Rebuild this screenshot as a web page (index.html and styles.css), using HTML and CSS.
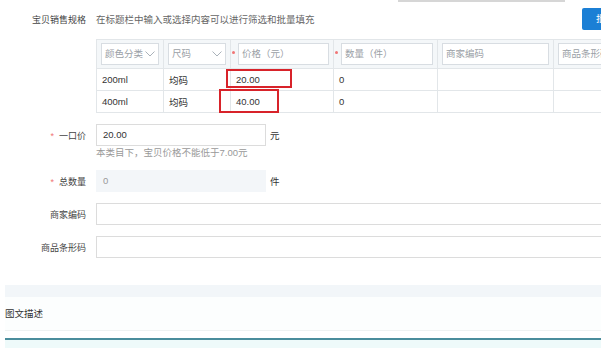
FILE: index.html
```html
<!DOCTYPE html>
<html lang="zh-CN">
<head>
<meta charset="UTF-8">
<title>宝贝销售规格</title>
<link rel="stylesheet" href="styles.css">
</head>
<body>
<div class="page">
  <div class="topline"></div>

  <div class="spec-row">
    <div class="label">宝贝销售规格</div>
    <div class="spec-hint">在标题栏中输入或选择内容可以进行筛选和批量填充</div>
    <div class="btn-batch">批量填充</div>
  </div>

  <table class="sku">
    <colgroup>
      <col style="width:67px"><col style="width:67px"><col style="width:103px">
      <col style="width:104px"><col style="width:116px"><col style="width:130px">
    </colgroup>
    <thead>
      <tr>
        <td><div class="hbox select">颜色分类<svg class="chev" width="10" height="6" viewBox="0 0 10 6"><polyline points="0.5,0.5 5,5 9.5,0.5" fill="none" stroke="#aab2ba" stroke-width="1"/></svg></div></td>
        <td><div class="hbox select">尺码<svg class="chev" width="10" height="6" viewBox="0 0 10 6"><polyline points="0.5,0.5 5,5 9.5,0.5" fill="none" stroke="#aab2ba" stroke-width="1"/></svg></div></td>
        <td class="req"><div class="hcell"><span class="hstar"></span><div class="hbox">价格（元）</div></div></td>
        <td class="req"><div class="hcell"><span class="hstar"></span><div class="hbox">数量（件）</div></div></td>
        <td><div class="hbox">商家编码</div></td>
        <td><div class="hbox">商品条形码</div></td>
      </tr>
    </thead>
    <tbody>
      <tr>
        <td>200ml</td><td>均码</td>
        <td class="price">20.00<span class="mark mark-1"></span></td>
        <td>0</td><td></td><td></td>
      </tr>
      <tr>
        <td>400ml</td><td>均码</td>
        <td class="price">40.00<span class="mark mark-2"></span></td>
        <td>0</td><td></td><td></td>
      </tr>
    </tbody>
  </table>

  <div class="form-row row-price">
    <div class="label"><span class="star">*</span>一口价</div>
    <div class="input">20.00</div>
    <span class="unit">元</span>
  </div>
  <div class="field-hint">本类目下，宝贝价格不能低于7.00元</div>

  <div class="form-row row-qty">
    <div class="label"><span class="star">*</span>总数量</div>
    <div class="input disabled">0</div>
    <span class="unit">件</span>
  </div>

  <div class="form-row row-code">
    <div class="label">商家编码</div>
    <div class="input wide"></div>
  </div>

  <div class="form-row row-bar">
    <div class="label">商品条形码</div>
    <div class="input wide"></div>
  </div>

  <div class="desc-band"></div>
  <div class="desc-head">图文描述</div>
  <div class="desc-line"></div>
  <div class="desc-body"></div>
</div>
</body>
</html>
```

FILE: styles.css
```css
body {
    margin: 0;
    font-family: "Liberation Sans", "Noto Sans CJK SC", sans-serif;
    font-size: 9.5px;
    color: #333;
    background: #fff;
    overflow: hidden;
}

.page {
    width: 700px;
}

.topline {
    margin-left: 398px;
    width: 167px;
    height: 2px;
    background: #d6d6d6;
}

/* 规格标题行 */
.spec-row {
    display: flex;
    align-items: center;
    height: 22px;
    margin-top: 6px;
}

.label {
    flex: none;
    width: 86px;
    text-align: right;
    font-size: 9px;
    color: #444;
}

.spec-hint {
    flex: 1;
    margin-left: 10px;
    color: #666;
}

.btn-batch {
    flex: none;
    width: 118px;
    height: 22px;
    line-height: 22px;
    padding-left: 14px;
    box-sizing: border-box;
    background: #1b7fd5;
    color: #fff;
    border-radius: 2px;
}

/* SKU 表格 */
.sku {
    margin: 9px 0 0 96px;
    border-collapse: collapse;
    table-layout: fixed;
    width: 587px;
}

.sku td {
    border: 1px solid #e2e6e9;
    height: 21px;
    padding: 0 5px;
    white-space: nowrap;
    overflow: visible;
}

.sku thead td {
    background: #f4f7f9;
    height: 28px;
    padding: 0 4px;
}

.sku thead td.req {
    padding-left: 1px;
}

.hcell {
    display: flex;
    align-items: center;
}

.hstar {
    flex: none;
    width: 3px;
    height: 3px;
    margin: 0 3px 4px 0;
    border-radius: 50%;
    background: #f07575;
}

.hbox {
    flex: 1;
    height: 22px;
    line-height: 20px;
    box-sizing: border-box;
    border: 1px solid #d8dde2;
    background: #fff;
    color: #9aa0a6;
    padding: 0 3px;
}

.select {
    display: flex;
    align-items: center;
    justify-content: space-between;
}

.chev {
    flex: none;
}

.price {
    position: relative;
}

.mark {
    position: absolute;
    border: 2px solid #d8232a;
    box-sizing: border-box;
}

.mark-1 {
    left: -5px;
    top: 0;
    width: 66px;
    height: 19px;
}

.mark-2 {
    left: -12px;
    top: -2px;
    width: 60px;
    height: 24px;
}

/* 表单 */
.form-row {
    display: flex;
    align-items: center;
    height: 22px;
}

.form-row .label {
    margin-right: 10px;
}

.star {
    color: #f07575;
    margin-right: 5px;
}

.row-price { margin-top: 11px; }
.row-qty { margin-top: 10px; }
.row-code { margin-top: 11px; }
.row-bar { margin-top: 11px; }

.input {
    width: 170px;
    height: 22px;
    line-height: 20px;
    box-sizing: border-box;
    border: 1px solid #dcdcdc;
    padding: 0 6px;
    background: #fff;
}

.input.wide {
    flex: 1;
}

.input.disabled {
    border-color: #f3f6f9;
    background: #f3f6f9;
    color: #999;
}

.unit {
    margin-left: 4px;
}

.field-hint {
    margin-left: 96px;
    height: 14px;
    line-height: 14px;
    color: #999;
}

/* 图文描述 */
.desc-band {
    margin: 27px 0 0 5px;
    height: 12px;
    background: #f2f6f9;
}

.desc-head {
    margin-left: 5px;
    height: 33px;
    line-height: 33px;
    background: #fcfefe;
    border-bottom: 1px solid #eef2f2;
    color: #333;
}

.desc-line {
    margin: 7px 0 0 5px;
    height: 2px;
    background: #4a8d9c;
}

.desc-body {
    margin-left: 5px;
    height: 20px;
    background: #eefafa;
}
```
